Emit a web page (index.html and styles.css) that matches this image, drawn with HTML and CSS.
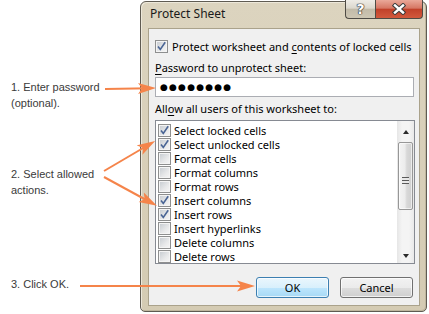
FILE: index.html
```html
<!DOCTYPE html>
<html lang="en">
<head>
<meta charset="utf-8">
<title>Protect Sheet</title>
<link rel="stylesheet" href="styles.css">
</head>
<body>
<div class="page">
  <div class="notes">
    <p class="note n1">1. Enter password<br>(optional).</p>
    <p class="note n2">2. Select allowed<br>actions.</p>
    <p class="note n3">3. Click OK.</p>
  </div>
  <div class="dialog">
    <div class="titlebar">
      <span class="title">Protect Sheet</span>
      <div class="caption">
        <span class="cbtn help">?</span>
        <span class="cbtn close"><svg width="16" height="12" viewBox="0 0 16 12"><path d="M4 2.5 L12 9.5 M12 2.5 L4 9.5" stroke="#3b3b3b" stroke-width="4.4" stroke-linecap="square" fill="none"/><path d="M4 2.5 L12 9.5 M12 2.5 L4 9.5" stroke="#fff" stroke-width="2.4" stroke-linecap="square" fill="none"/></svg></span>
      </div>
    </div>
    <div class="client">
      <div class="chk-row top">
        <span class="cb on"><svg width="11" height="11" viewBox="0 0 11 11"><path d="M2 5.5 L4.3 8.5 L9.2 1.2" stroke="#4a6595" stroke-width="1.6" fill="none"/></svg></span>
        <span>Protect worksheet and <u>c</u>ontents of locked cells</span>
      </div>
      <div class="label pw-label"><u>P</u>assword to unprotect sheet:</div>
      <div class="input">●●●●●●●●</div>
      <div class="label allow-label">All<u>o</u>w all users of this worksheet to:</div>
      <div class="list">
        <ul class="items">
          <li><span class="cb on"><svg width="11" height="11" viewBox="0 0 11 11"><path d="M2 5.5 L4.3 8.5 L9.2 1.2" stroke="#4a6595" stroke-width="1.6" fill="none"/></svg></span>Select locked cells</li>
          <li><span class="cb on"><svg width="11" height="11" viewBox="0 0 11 11"><path d="M2 5.5 L4.3 8.5 L9.2 1.2" stroke="#4a6595" stroke-width="1.6" fill="none"/></svg></span>Select unlocked cells</li>
          <li><span class="cb"></span>Format cells</li>
          <li><span class="cb"></span>Format columns</li>
          <li><span class="cb"></span>Format rows</li>
          <li><span class="cb on"><svg width="11" height="11" viewBox="0 0 11 11"><path d="M2 5.5 L4.3 8.5 L9.2 1.2" stroke="#4a6595" stroke-width="1.6" fill="none"/></svg></span>Insert columns</li>
          <li><span class="cb on"><svg width="11" height="11" viewBox="0 0 11 11"><path d="M2 5.5 L4.3 8.5 L9.2 1.2" stroke="#4a6595" stroke-width="1.6" fill="none"/></svg></span>Insert rows</li>
          <li><span class="cb"></span>Insert hyperlinks</li>
          <li><span class="cb"></span>Delete columns</li>
          <li><span class="cb"></span>Delete rows</li>
        </ul>
        <div class="scrollbar">
          <span class="sb-btn"><span class="tri up"></span></span>
          <span class="thumb"><span class="grip"></span></span>
          <span class="sb-fill"></span>
          <span class="sb-btn"><span class="tri down"></span></span>
        </div>
      </div>
      <div class="buttons">
        <button class="btn ok">OK</button>
        <button class="btn">Cancel</button>
      </div>
    </div>
  </div>
  <svg class="arrows" width="429" height="314" viewBox="0 0 429 314">
    <defs>
      <marker id="head" markerUnits="userSpaceOnUse" markerWidth="19" markerHeight="12" refX="12" refY="6" orient="auto">
        <path d="M0,0.5 L18,6 L0,11.5 L4,6 Z" fill="#f5844a"/>
      </marker>
    </defs>
    <g stroke="#f5844a" stroke-width="2" fill="none" marker-end="url(#head)">
      <line x1="105" y1="89" x2="150" y2="88.2"/>
      <line x1="104" y1="171" x2="150" y2="144"/>
      <line x1="104" y1="177" x2="151.7" y2="203"/>
      <line x1="80" y1="286" x2="249" y2="286"/>
    </g>
  </svg>
</div>
</body>
</html>
```

FILE: styles.css
```css
body {
  margin: 0;
  width: 429px;
  height: 314px;
  overflow: hidden;
  background: #fff;
}

.page {
  position: relative;
  display: flex;
  width: 429px;
  height: 314px;
  font-family: "Noto Sans", sans-serif;
  font-size: 11px;
  color: #000;
}

.notes {
  width: 140px;
  flex: none;
  box-sizing: border-box;
  padding-left: 11px;
  font-family: "Liberation Sans", Arial, sans-serif;
  font-size: 11px;
  line-height: 16px;
  color: #3a3a3a;
}

.note { margin: 0; }
.n1 { margin-top: 79px; }
.n2 { margin-top: 55px; }
.n3 { margin-top: 78px; }

.dialog {
  width: 287px;
  height: 311px;
  margin-top: 1px;
  box-sizing: border-box;
  border: 1px solid #5f5b52;
  border-radius: 6px 6px 5px 5px;
  background: linear-gradient(#dcd4bf, #d4cbb3);
  box-shadow: inset 1px 1px 0 #ede8da, inset -1px -1px 0 #bfb69e;
  padding: 0 6px 5px 7px;
  display: flex;
  flex-direction: column;
}

.titlebar {
  height: 26px;
  display: flex;
  align-items: flex-start;
  flex: none;
}

.title {
  padding: 4px 0 0 2px;
  font-size: 12px;
  line-height: 16px;
  color: #1a1a1a;
}

.caption {
  margin-left: auto;
  margin-top: -2px;
  margin-right: -3px;
  display: flex;
  height: 19px;
}

.cbtn {
  box-sizing: border-box;
  height: 19px;
  border: 1px solid #4e4b45;
  border-top: none;
  display: flex;
  align-items: center;
  justify-content: center;
}

.help {
  width: 30px;
  border-right: none;
  border-bottom-left-radius: 4px;
  background: linear-gradient(#eeece6, #dcd8cd 45%, #c2bba9 52%, #cdc6b3);
  color: #fff;
  font-family: "DejaVu Sans", sans-serif;
  font-weight: bold;
  font-size: 14px;
  line-height: 1;
  text-shadow: 0 0 1px #333, 0 0 1px #333, 0 0 1px #333, 0 0 1px #333;
}

.close {
  width: 48px;
  border-bottom-right-radius: 4px;
  background: linear-gradient(#eaa899, #d67764 45%, #c1412a 52%, #d2593d);
}

.client {
  height: 278px;
  flex: none;
  box-sizing: border-box;
  border: 1px solid #aaa28b;
  background: #f0f0f0;
  padding: 0 4px 0 6px;
  display: flex;
  flex-direction: column;
}

.chk-row {
  display: flex;
  align-items: center;
  gap: 4px;
  height: 16px;
}

.chk-row.top { margin-top: 9px; }

.label {
  line-height: 16px;
  height: 16px;
}

.pw-label { margin-top: 6px; }
.allow-label { margin-top: 4px; }

u { text-decoration-thickness: 1px; text-underline-offset: 2px; }

.input {
  margin-top: 1px;
  margin-right: 1px;
  height: 20px;
  box-sizing: border-box;
  border: 1px solid #abadb3;
  background: #fff;
  padding-left: 4px;
  font-family: "DejaVu Sans", sans-serif;
  font-size: 9px;
  letter-spacing: 1.2px;
  line-height: 18px;
  color: #000;
}

.cb {
  width: 13px;
  height: 13px;
  flex: none;
  box-sizing: border-box;
  border: 1px solid #8e8f8f;
  background: linear-gradient(135deg, #c4c9cf 0%, #e8e9ea 60%, #f6f6f6 100%);
  box-shadow: inset 0 0 0 1px #f4f4f4;
  display: flex;
  align-items: center;
  justify-content: center;
}

.cb svg { display: block; }

.list {
  margin-top: 3px;
  height: 144px;
  box-sizing: border-box;
  border: 1px solid #868a92;
  background: #fff;
  display: flex;
}

.items {
  flex: 1;
  margin: 0;
  padding: 2px 0 0 2px;
  list-style: none;
}

.items li {
  height: 14px;
  display: flex;
  align-items: center;
  gap: 3px;
}

.scrollbar {
  width: 17px;
  flex: none;
  display: flex;
  flex-direction: column;
  background: linear-gradient(90deg, #e6e6e6, #f4f4f4 30%, #f4f4f4 70%, #e9e9e9);
}

.sb-btn {
  height: 17px;
  display: flex;
  align-items: center;
  justify-content: center;
}

.tri {
  width: 0;
  height: 0;
  border-left: 3.5px solid transparent;
  border-right: 3.5px solid transparent;
}

.tri.up { border-bottom: 4px solid #2b2b2b; margin-top: 5px; }
.tri.down { border-top: 4px solid #2b2b2b; margin-top: 3px; }

.thumb {
  margin: 4px 1px 0 1px;
  height: 68px;
  box-sizing: border-box;
  border: 1px solid #979797;
  border-radius: 2px;
  background: linear-gradient(90deg, #f4f4f4, #ececec 45%, #d8d8d8 60%, #cfcfcf);
  box-shadow: inset 0 0 0 1px rgba(255,255,255,0.6);
  display: flex;
  align-items: center;
  justify-content: center;
}

.grip {
  width: 7px;
  height: 7px;
  background: repeating-linear-gradient(#5a5a5a 0 1px, #e8e8e8 1px 3px);
  margin-top: 9px;
}

.sb-fill { flex: 1; }

.buttons {
  display: flex;
  justify-content: flex-end;
  gap: 11px;
  margin-top: 13px;
  padding-right: 2px;
}

.btn {
  width: 73px;
  height: 21px;
  box-sizing: border-box;
  border: 1px solid #707070;
  border-radius: 3px;
  background: linear-gradient(#f2f2f2, #ebebeb 50%, #dddddd 50%, #cfcfcf);
  box-shadow: inset 0 0 0 1px rgba(255,255,255,0.7);
  font-family: "Noto Sans", sans-serif;
  font-size: 11px;
  color: #000;
  padding: 0;
  line-height: 17px;
}

.btn.ok {
  border-color: #3c7fb1;
  background: linear-gradient(#eaf6fd, #d9f0fc 50%, #bee6fd 50%, #a7d9f5);
}

.arrows {
  position: absolute;
  left: 0;
  top: 0;
  pointer-events: none;
}
```
